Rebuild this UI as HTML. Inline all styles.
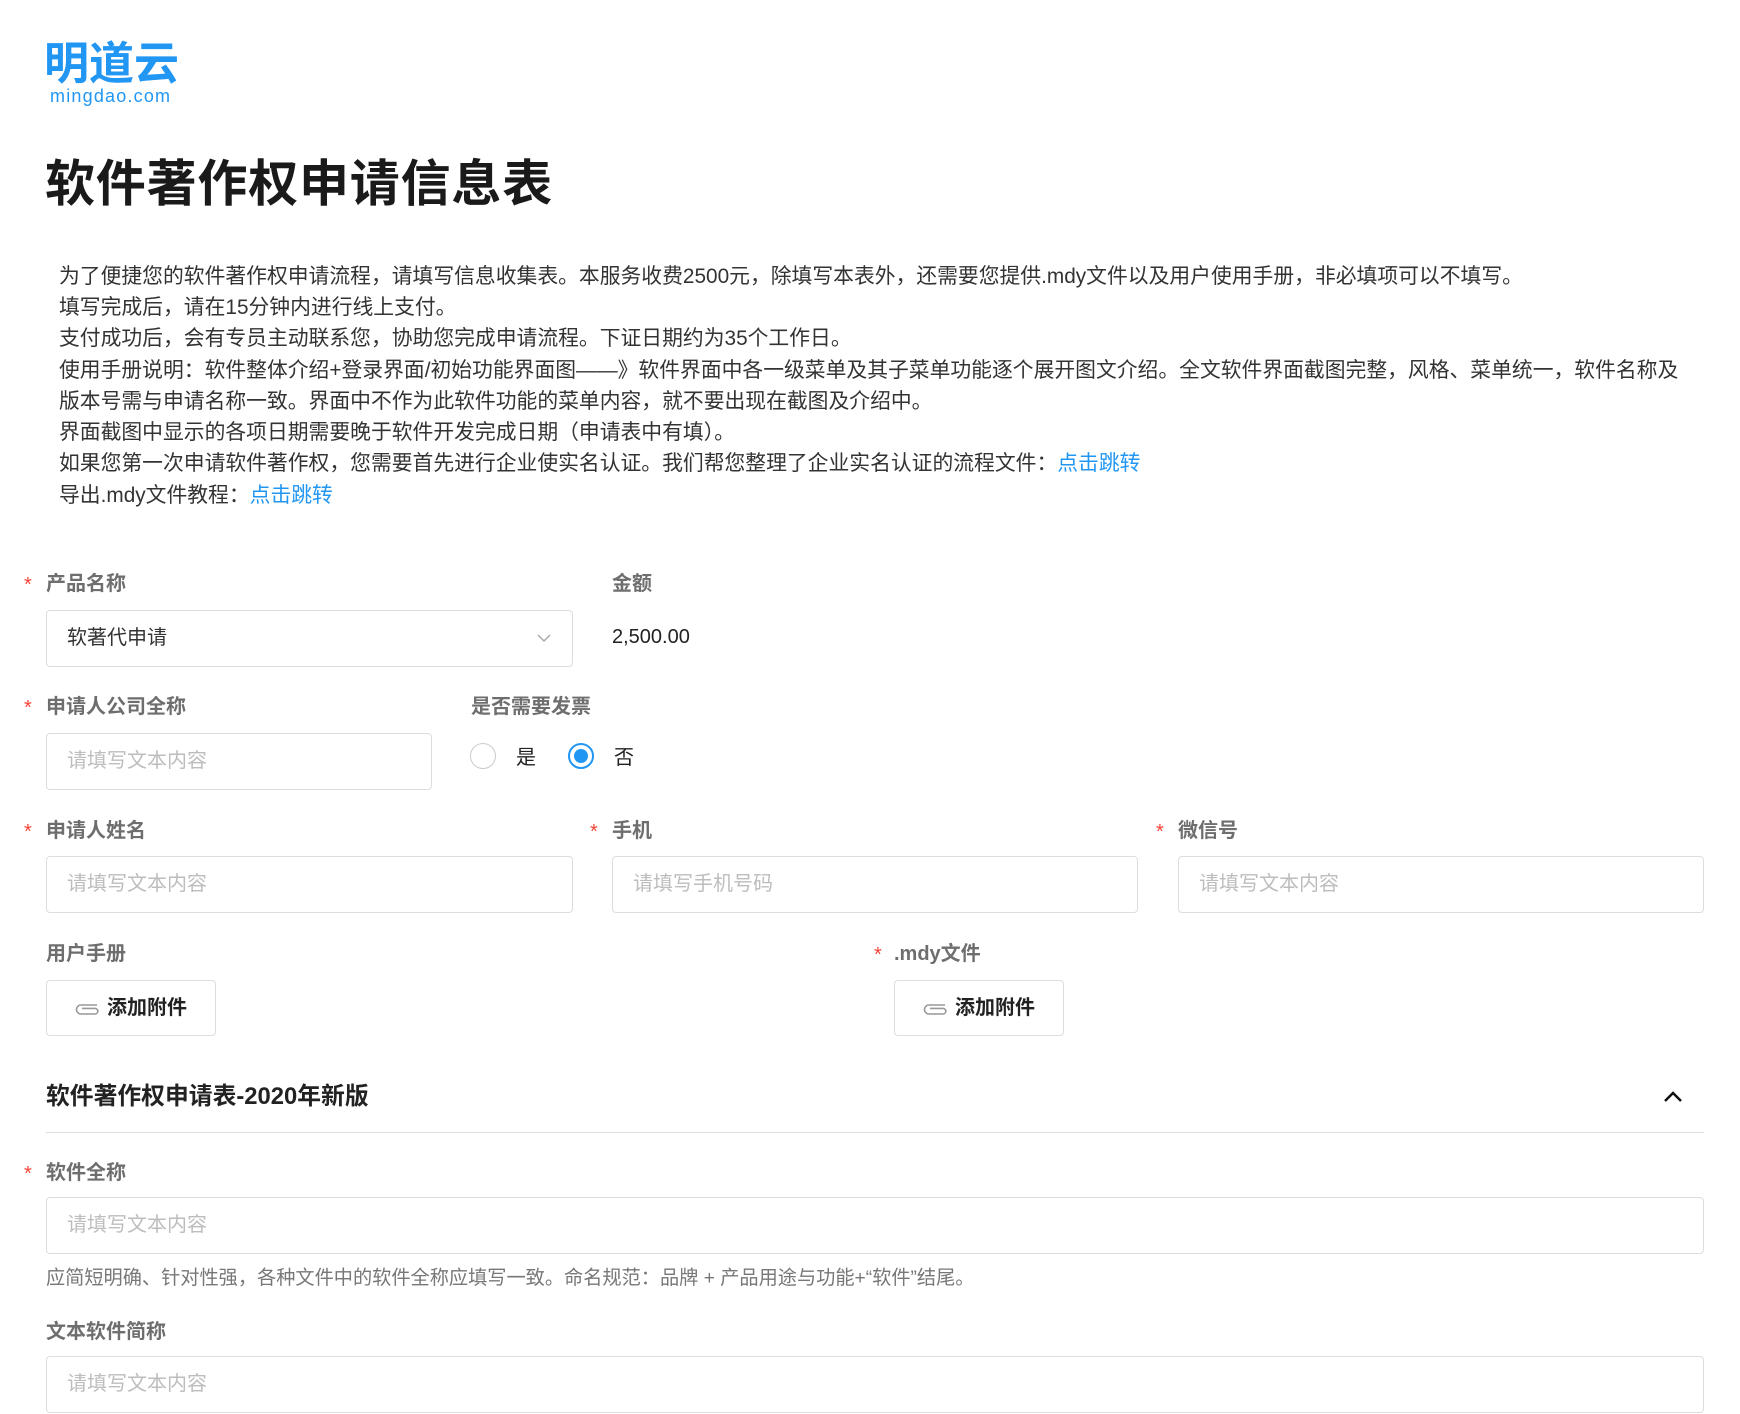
<!DOCTYPE html>
<html><head><meta charset="utf-8"><style>
*{margin:0;padding:0;box-sizing:border-box}
body{width:1740px;height:1414px;overflow:hidden;background:#fff;font-family:"Liberation Sans","Noto Sans CJK SC",sans-serif;color:#333;position:relative}
.a{position:absolute;white-space:nowrap}
.logo{left:44px;top:36px;font-size:45px;font-weight:bold;color:#2196f3;letter-spacing:0px;line-height:56px}
.logo2{left:50px;top:86px;font-size:18px;color:#2196f3;letter-spacing:1.2px}
.title{left:45px;top:152px;font-size:50px;font-weight:bold;color:#1a1a1a;letter-spacing:0.8px;line-height:64px}
.p{left:59px;font-size:20.8px;color:#333;line-height:31px}
.lnk{color:#2196f3}
.lbl{font-size:20px;font-weight:bold;color:#6e6e6e;line-height:28px}
.st{color:#f44336;font-size:20px;line-height:28px}
.box{position:absolute;border:1px solid #ddd;border-radius:4px;height:57px;font-size:20px;color:#bdbdbd;padding-left:20px;line-height:55px}
.btn{position:absolute;border:1px solid #ddd;border-radius:4px;width:170px;height:56px;font-size:20px;font-weight:bold;color:#222;line-height:54px;padding-left:60px}
.clip{position:absolute;left:26px;top:19px}
</style></head><body>
<div class="a logo">明道云</div>
<div class="a logo2">mingdao.com</div>
<div class="a title">软件著作权申请信息表</div>
<div class="a p" style="top:261px">为了便捷您的软件著作权申请流程，请填写信息收集表。本服务收费2500元，除填写本表外，还需要您提供.mdy文件以及用户使用手册，非必填项可以不填写。</div>
<div class="a p" style="top:292px">填写完成后，请在15分钟内进行线上支付。</div>
<div class="a p" style="top:323px">支付成功后，会有专员主动联系您，协助您完成申请流程。下证日期约为35个工作日。</div>
<div class="a p" style="top:355px">使用手册说明：软件整体介绍+登录界面/初始功能界面图——》软件界面中各一级菜单及其子菜单功能逐个展开图文介绍。全文软件界面截图完整，风格、菜单统一，软件名称及</div>
<div class="a p" style="top:386px">版本号需与申请名称一致。界面中不作为此软件功能的菜单内容，就不要出现在截图及介绍中。</div>
<div class="a p" style="top:417px">界面截图中显示的各项日期需要晚于软件开发完成日期（申请表中有填）。</div>
<div class="a p" style="top:448px">如果您第一次申请软件著作权，您需要首先进行企业使实名认证。我们帮您整理了企业实名认证的流程文件：<span class="lnk">点击跳转</span></div>
<div class="a p" style="top:480px">导出.mdy文件教程：<span class="lnk">点击跳转</span></div>

<div class="a st" style="left:24px;top:571px">*</div><div class="a lbl" style="left:46px;top:570px">产品名称</div>
<div class="a lbl" style="left:612px;top:570px">金额</div>
<div class="box" style="left:46px;top:610px;width:527px;color:#333">软著代申请
<svg style="position:absolute;right:20px;top:21px" width="16" height="12" viewBox="0 0 16 12"><path d="M2 3l6 6 6-6" fill="none" stroke="#aaa" stroke-width="1.5"/></svg></div>
<div class="a" style="left:612px;top:626px;font-size:20px;color:#222">2,500.00</div>

<div class="a st" style="left:24px;top:694px">*</div><div class="a lbl" style="left:46px;top:693px">申请人公司全称</div>
<div class="a lbl" style="left:471px;top:693px">是否需要发票</div>
<div class="box" style="left:46px;top:733px;width:386px">请填写文本内容</div>
<div class="a" style="left:470px;top:743px;width:26px;height:26px;border:1px solid #ccc;border-radius:50%"></div>
<div class="a" style="left:516px;top:741px;font-size:20px;color:#222">是</div>
<div class="a" style="left:568px;top:743px;width:26px;height:26px;border:2px solid #2196f3;border-radius:50%"><div style="margin:4px;width:14px;height:14px;border-radius:50%;background:#2196f3"></div></div>
<div class="a" style="left:614px;top:741px;font-size:20px;color:#222">否</div>

<div class="a st" style="left:24px;top:818px">*</div><div class="a lbl" style="left:46px;top:817px">申请人姓名</div>
<div class="a st" style="left:590px;top:818px">*</div><div class="a lbl" style="left:612px;top:817px">手机</div>
<div class="a st" style="left:1156px;top:818px">*</div><div class="a lbl" style="left:1178px;top:817px">微信号</div>
<div class="box" style="left:46px;top:856px;width:527px">请填写文本内容</div>
<div class="box" style="left:612px;top:856px;width:526px">请填写手机号码</div>
<div class="box" style="left:1178px;top:856px;width:526px">请填写文本内容</div>

<div class="a lbl" style="left:46px;top:940px">用户手册</div>
<div class="a st" style="left:874px;top:941px">*</div><div class="a lbl" style="left:894px;top:940px">.mdy文件</div>
<div class="btn" style="left:46px;top:980px"><svg class="clip" width="28" height="18" viewBox="0 0 28 18"><path d="M24 5H8a4.5 4.5 0 0 0 0 9h14a2.8 2.8 0 0 0 0-5.6H9" fill="none" stroke="#999" stroke-width="1.6"/></svg>添加附件</div>
<div class="btn" style="left:894px;top:980px"><svg class="clip" width="28" height="18" viewBox="0 0 28 18"><path d="M24 5H8a4.5 4.5 0 0 0 0 9h14a2.8 2.8 0 0 0 0-5.6H9" fill="none" stroke="#999" stroke-width="1.6"/></svg>添加附件</div>

<div class="a" style="left:46px;top:1076px;font-size:23.8px;font-weight:bold;color:#222">软件著作权申请表-2020年新版</div>
<svg class="a" style="left:1662px;top:1090px" width="22" height="14" viewBox="0 0 22 14"><path d="M3 11l8-8 8 8" fill="none" stroke="#111" stroke-width="2.5"/></svg>
<div class="a" style="left:46px;top:1132px;width:1658px;height:1px;background:#ddd"></div>

<div class="a st" style="left:24px;top:1160px">*</div><div class="a lbl" style="left:46px;top:1159px">软件全称</div>
<div class="box" style="left:46px;top:1197px;width:1658px">请填写文本内容</div>
<div class="a" style="left:46px;top:1262px;font-size:19.2px;color:#777">应简短明确、针对性强，各种文件中的软件全称应填写一致。命名规范：品牌 + 产品用途与功能+“软件”结尾。</div>
<div class="a lbl" style="left:46px;top:1318px">文本软件简称</div>
<div class="box" style="left:46px;top:1356px;width:1658px">请填写文本内容</div>
</body></html>
